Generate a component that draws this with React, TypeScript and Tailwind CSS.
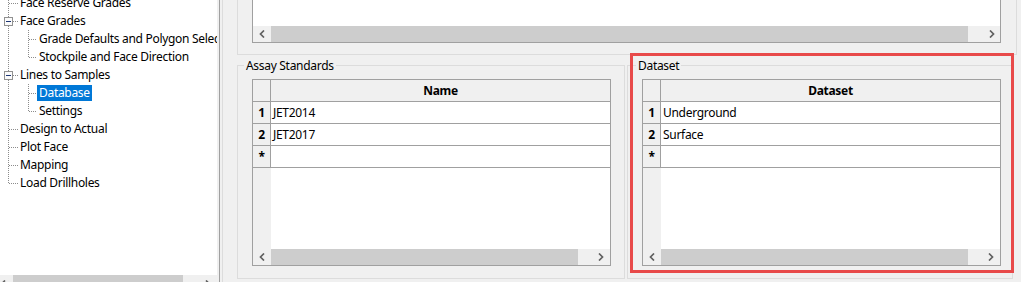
import React from "react";

type Kind = "T" | "L" | "I" | "Tm";

const tree: { label: string; cells: Kind[]; selected?: boolean }[] = [
  { label: "Face Reserve Grades", cells: ["T"] },
  { label: "Face Grades", cells: ["Tm"] },
  { label: "Grade Defaults and Polygon Selection", cells: ["I", "T"] },
  { label: "Stockpile and Face Direction", cells: ["I", "L"] },
  { label: "Lines to Samples", cells: ["Tm"] },
  { label: "Database", cells: ["I", "T"], selected: true },
  { label: "Settings", cells: ["I", "L"] },
  { label: "Design to Actual", cells: ["T"] },
  { label: "Plot Face", cells: ["T"] },
  { label: "Mapping", cells: ["T"] },
  { label: "Load Drillholes", cells: ["L"] },
];

const Connector = ({ kind, w, x }: { kind: Kind; w: number; x: number }) => (
  <svg width={w} height={18} className="shrink-0">
    <line x1={x + 0.5} y1={0} x2={x + 0.5} y2={kind === "L" ? 10 : 18} stroke="#8c8c8c" strokeDasharray="1 1" />
    {kind !== "I" && (
      <line x1={x + 1} y1={9.5} x2={w} y2={9.5} stroke="#8c8c8c" strokeDasharray="1 1" />
    )}
    {kind === "Tm" && (
      <g>
        <rect x={x - 3.5} y={5.5} width={8} height={8} fill="#fbfbfb" stroke="#919191" />
        <line x1={x - 2} y1={9.5} x2={x + 3} y2={9.5} stroke="#1c3574" />
      </g>
    )}
  </svg>
);

const Chevron = ({ dir }: { dir: "left" | "right" }) => (
  <svg width="6" height="8" viewBox="0 0 6 8">
    <path
      d={dir === "left" ? "M5 0.5 L1.5 4 L5 7.5" : "M1 0.5 L4.5 4 L1 7.5"}
      fill="none"
      stroke="#606060"
      strokeWidth="1.7"
    />
  </svg>
);

const ScrollBar = ({ pr = "pr-[6px]" }: { pr?: string }) => (
  <div className="flex h-[16px] bg-[#f0f0f0] shrink-0">
    <div className="w-[18px] flex items-center justify-center">
      <Chevron dir="left" />
    </div>
    <div className="flex-1 bg-[#cdcdcd]" />
    <div className={`w-[32px] flex items-center justify-end ${pr}`}>
      <Chevron dir="right" />
    </div>
  </div>
);

const Grid = ({ header, rows }: { header: string; rows: string[] }) => (
  <div className="w-[359px] h-[187px] border border-[#a0a0a0] bg-white flex flex-col">
    <div className="flex h-[22px] border-b border-[#a0a0a0] bg-[#f0f0f0] shrink-0">
      <div className="w-[18px] border-r border-[#a0a0a0]" />
      <div className="flex-1 flex items-center justify-center font-bold">{header}</div>
    </div>
    {[...rows, ""].map((r, i) => (
      <div key={i} className="flex h-[22px] border-b border-[#a0a0a0] shrink-0">
        <div className="w-[18px] border-r border-[#a0a0a0] bg-[#f0f0f0] flex items-center justify-center font-bold">
          {i < rows.length ? i + 1 : "*"}
        </div>
        <div className="flex-1 flex items-center pl-[2px]">{r}</div>
      </div>
    ))}
    <div className="flex-1 flex">
      <div className="w-[18px] bg-[#f0f0f0]" />
      <div className="flex-1" />
    </div>
    <ScrollBar />
  </div>
);

const GroupBox = ({
  title,
  width,
  labelMl,
  children,
}: {
  title: string;
  width: string;
  labelMl: string;
  children: React.ReactNode;
}) => (
  <div className={`${width} h-[214px] border border-[#dcdcdc] flex flex-col`}>
    <span className={`-mt-[8px] ${labelMl} w-fit px-[2px] leading-[15px] bg-[#f0f0f0]`}>{title}</span>
    <div className="mt-[6px] ml-[14px]">{children}</div>
  </div>
);

export default function App() {
  return (
    <div className="w-[1021px] h-[282px] overflow-hidden flex items-start bg-[#f0f0f0] text-[12px] tracking-[-0.3px] text-black font-['Noto_Sans',sans-serif]">
      {/* tree */}
      <div className="w-[217px] h-[292px] bg-white flex flex-col shrink-0 overflow-hidden">
        <div className="flex-1 -mt-[6px]">
          {tree.map((t) => (
            <div key={t.label} className="flex items-center h-[18px] whitespace-nowrap">
              {t.cells.map((c, i) =>
                i === 0 ? <Connector key={i} kind={c} w={18} x={8} /> : <Connector key={i} kind={c} w={19} x={10} />
              )}
              <span
                className={`px-[2px] h-[16px] leading-[16px] ${t.selected ? "bg-[#0078d7] text-white" : ""}`}
              >
                {t.label}
              </span>
            </div>
          ))}
        </div>
        <div className="flex h-[17px] bg-[#f0f0f0] shrink-0">
          <div className="w-[13px] flex items-center justify-start">
            <Chevron dir="left" />
          </div>
          <div className="w-[170px] bg-[#cdcdcd]" />
          <div className="flex-1 flex items-center justify-end pr-[6px]">
            <Chevron dir="right" />
          </div>
        </div>
      </div>

      {/* splitter */}
      <div className="w-[5px] h-[282px] flex shrink-0">
        <div className="w-[2px]" />
        <div className="w-px bg-[#a0a0a0]" />
        <div className="w-[2px]" />
      </div>

      {/* right panel */}
      <div className="flex-1 h-[282px] border-l border-[#dcdcdc] pl-[14px] flex flex-col">
        <div className="w-[780px] h-[55px] border-x border-b border-[#dcdcdc] shrink-0">
          <div className="ml-[14px] w-[749px] h-[43px] border-x border-b border-[#a0a0a0] bg-white flex flex-col">
            <div className="flex-1" />
            <ScrollBar pr="pr-[5px]" />
          </div>
        </div>
        <div className="mt-[10px] flex gap-[2px]">
          <GroupBox title="Assay Standards" width="w-[388px]" labelMl="ml-[6px]">
            <Grid header="Name" rows={["JET2014", "JET2017"]} />
          </GroupBox>
          <GroupBox title="Dataset" width="w-[386px]" labelMl="ml-[8px]">
            <Grid header="Dataset" rows={["Underground", "Surface"]} />
          </GroupBox>
        </div>
      </div>

      {/* annotation highlight */}
      <div className="absolute left-[630px] top-[53px] w-[384px] h-[220px] border-[3px] border-[#e84a4a] pointer-events-none" />
    </div>
  );
}
